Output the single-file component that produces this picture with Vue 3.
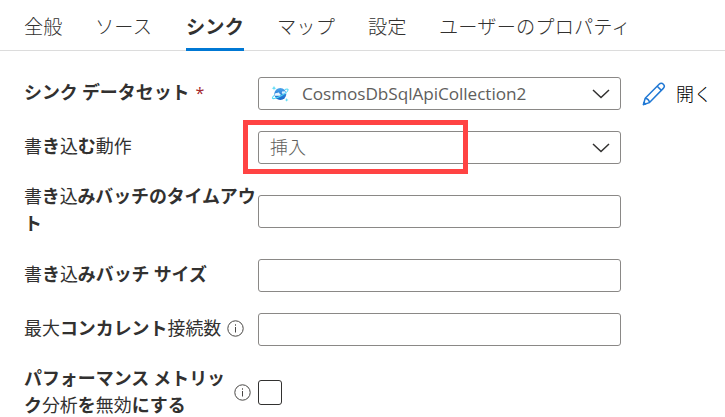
<script setup>
const tabs = [
  { text: '全般', width: 38 },
  { text: 'ソース', width: 58 },
  { text: 'シンク', width: 58, active: true },
  { text: 'マップ', width: 58 },
  { text: '設定', width: 38 },
  { text: 'ユーザーのプロパティ', width: 194 },
]
</script>

<template>
  <main class="panel">
    <nav class="tabs">
      <div v-for="t in tabs" :key="t.text" class="tab" :class="{ active: t.active }" :style="{ width: t.width + 'px' }">{{ t.text }}</div>
    </nav>
    <form class="form">
      <div class="row">
        <div class="label"><div><b>シンク データセット</b></div><span class="req">*</span></div>
        <div class="select">
          <svg class="cosmos" width="18" height="18" viewBox="0 0 18 18">
            <defs>
              <linearGradient id="planet" x1="0" y1="0" x2="0" y2="1"><stop offset="0" stop-color="#4ba4ec" /><stop offset="1" stop-color="#1664c8" /></linearGradient>
            </defs>
            <circle cx="9.300" cy="9" r="6" fill="url(#planet)" />
            <path d="M3.800 9.800c0-1.400 1.200-2 2.200-1.600.6-1.300 2.600-.9 2.600.5 1.500.2 1.400 1.900.2 2.100H4z" fill="#eaf6ff" />
            <path d="M10.800 7.800c-.1-1.500 1.300-2 2-1.200.6-.5 1.400-.2 1.700.4l.5 1.800h-3.200c-.6 0-1-.4-1-1z" fill="#d8efff" />
            <path d="M13.900 4.500c1.700-.6 2.900-.5 3.100 0 .4 1.200-2.600 4-6.800 6.300s-8.200 3.500-8.700 2.400c-.3-.7.600-1.900 2.100-3.100" fill="none" stroke="#50d9f5" stroke-width="1.100" />
            <path d="M3 .8l.6 1.800 1.800.6-1.800.6L3 5.600l-.6-1.800-1.800-.6 1.800-.6zM15.700 13l.5 1.400 1.400.5-1.400.5-.5 1.400-.5-1.400-1.400-.5 1.400-.5z" fill="#50d9f5" />
          </svg>
          <span class="value latin">CosmosDbSqlApiCollection2</span>
          <svg class="chev" width="18" height="10" viewBox="0 0 18 10"><path d="M1 1l8 7.500L17 1" /></svg>
        </div>
        <div class="open">
          <svg width="24" height="24" viewBox="0 0 24 24" fill="none" stroke="#2078d4" stroke-width="1.500" stroke-linejoin="round"><path d="M1.500 22.500l1.700-6.300L17.100 2.300c1.400-1.400 3.100-1.200 4.200-.1s1.300 2.900 0 4.200L7.500 20.600zM3.200 16.200c2.400.4 3.900 1.900 4.300 4.400M15.200 4.200l4.400 4.400" /><path d="M1.500 22.500l.5-2 1.500 1.500z" fill="#2078d4" /></svg>
          <span>開く</span>
        </div>
      </div>
      <div class="row">
        <div class="label"><div>書<b>き</b>込<b>む</b>動作</div></div>
        <div class="select">
          <span class="value">挿入</span>
          <svg class="chev" width="18" height="10" viewBox="0 0 18 10"><path d="M1 1l8 7.500L17 1" /></svg>
          <div class="highlight"></div>
        </div>
      </div>
      <div class="row tall">
        <div class="label timeout"><div>書<b>き</b>込<b>みバッチのタイムアウ<br />ト</b></div></div>
        <div class="input"></div>
      </div>
      <div class="row">
        <div class="label"><div>書<b>き</b>込<b>みバッチ サイズ</b></div></div>
        <div class="input"></div>
      </div>
      <div class="row">
        <div class="label"><div>最大<b>コンカレント</b>接続数</div>
          <svg class="info" width="17" height="17" viewBox="0 0 17 17"><circle cx="8.500" cy="8.500" r="7.700" /><path d="M8.500 7v5.500M8.500 4.300v1.400" /></svg>
        </div>
        <div class="input"></div>
      </div>
      <div class="row last">
        <div class="label">
          <div><b>パフォーマンス メトリッ<br />ク</b>分析<b>を</b>無効<b>にする</b></div>
          <svg class="info end" width="17" height="17" viewBox="0 0 17 17"><circle cx="8.500" cy="8.500" r="7.700" /><path d="M8.500 7v5.500M8.500 4.300v1.400" /></svg>
        </div>
        <div class="check"></div>
      </div>
    </form>
  </main>
</template>

<style>
body { background: #fff; overflow: hidden; }
</style>
<style scoped>
* { box-sizing: border-box; }
.panel { width: 725px; height: 417px; overflow: hidden; color: #323130; font-family: "Noto Sans CJK JP", sans-serif; font-weight: 300; }
.tabs { display: flex; gap: 33px; height: 51px; padding-left: 24px; border-bottom: 1px solid #dcdcdc; }
.tab { height: 51px; line-height: 53px; font-size: 19.200px; letter-spacing: 0.150px; white-space: nowrap; }
.tab.active { font-weight: 700; border-bottom: 3px solid #0078d4; }
.form { padding: 26px 0 0 24px; }
.row { display: flex; align-items: center; height: 33px; margin-bottom: 21px; }
.label { display: flex; align-items: center; flex: none; width: 234px; padding-bottom: 4px; font-size: 17.950px; line-height: 27px; white-space: nowrap; font-weight: 400; }
.label b { font-weight: 700; }
.row.tall { height: 53px; }
.row.last .label { padding-bottom: 3px; }
.label.timeout { padding-bottom: 6px; letter-spacing: -0.100px; }
.req { margin: 4px 0 0 6px; color: #a4262c; font-family: "Open Sans", sans-serif; font-size: 16px; font-weight: 400; }
.select, .input { position: relative; display: flex; align-items: center; flex: none; width: 363px; height: 33px; border: 1px solid #8a8886; border-radius: 3px; padding: 0 10px 0 12px; }
.value { color: #605e5c; font-size: 18px; line-height: 27px; padding-bottom: 3px; margin-left: -1px; flex: 1; }
.value.latin { font-family: "Open Sans", sans-serif; font-size: 17.200px; font-weight: 400; letter-spacing: -0.060px; margin-left: 13px; padding-bottom: 0; }
.chev { flex: none; }
.chev path { fill: none; stroke: #323130; stroke-width: 1.500; }
.highlight { position: absolute; left: -16px; top: -12px; width: 225px; height: 54px; border: 5px solid #ff4343; }
.open { display: flex; align-items: center; gap: 10px; margin-left: 21px; font-size: 18px; color: #000; }
.open span { padding-bottom: 2px; }
.info { flex: none; margin: 2px 0 0 6px; fill: none; stroke: #484644; stroke-width: 1; }
.info.end { margin: 2px 7px 0 auto; }
.row.last { height: 53px; margin-top: -1px; }
.check { width: 24px; height: 25px; border: 1px solid #323130; border-radius: 3px; }
</style>
